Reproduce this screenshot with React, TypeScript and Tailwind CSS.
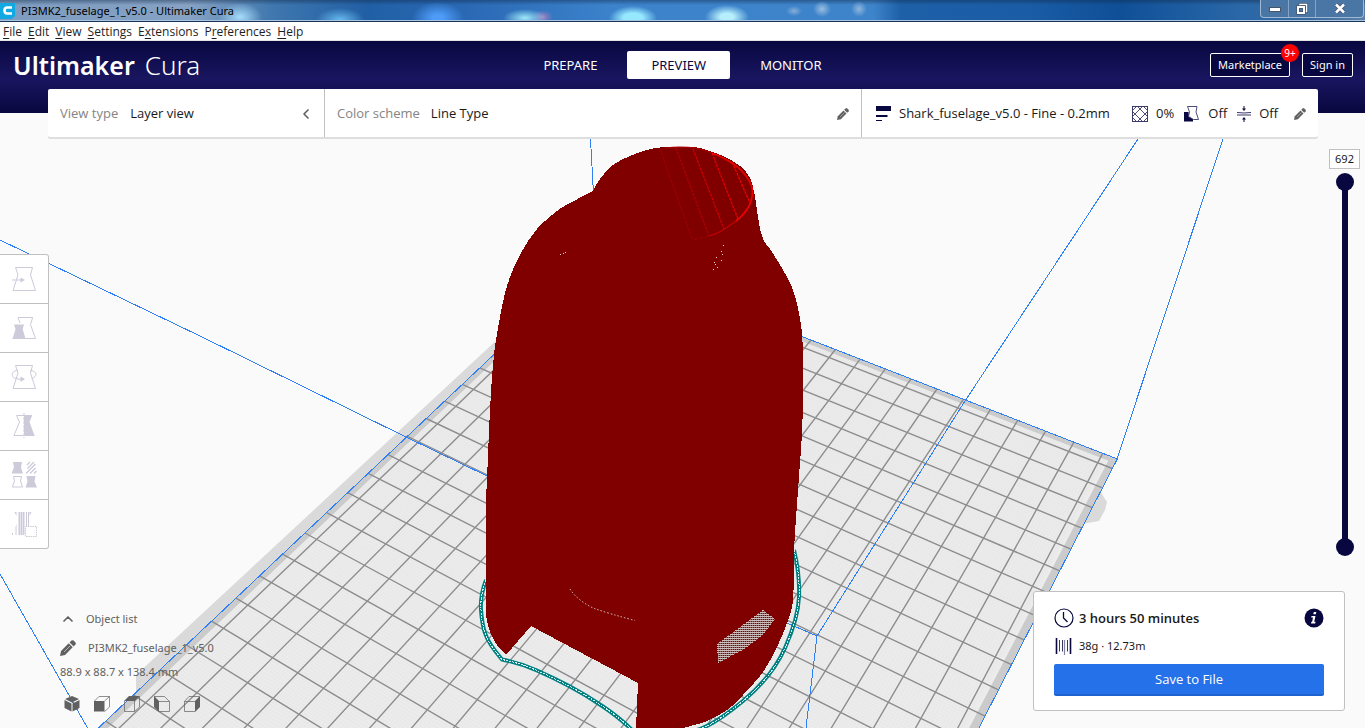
import { useState } from "react";
import type { ReactNode } from "react";
import { ChevronLeft, ChevronUp } from "lucide-react";

type Point = [number, number];

const PLATE_WIDTH = 210;
const PLATE_DEPTH = 250;

// Corners of the build plate on screen, with their perspective weights
const BACK = { x: 597.3, y: 257, w: 1 };
const RIGHT = { x: 1117.3, y: 459, w: 0.8447 };
const LEFT = { x: 91.5, y: 734.5, w: 0.7058 };

// Plate position in mm (measured from the back corner) to screen position
const project = (u: number, v: number): Point => {
  const s = u / PLATE_WIDTH;
  const t = v / PLATE_DEPTH;
  const a = (1 - s - t) * BACK.w;
  const b = s * RIGHT.w;
  const c = t * LEFT.w;
  const w = a + b + c;
  return [
    (a * BACK.x + b * RIGHT.x + c * LEFT.x) / w,
    (a * BACK.y + b * RIGHT.y + c * LEFT.y) / w,
  ];
};

const segment = (from: Point, to: Point) =>
  `M${from[0].toFixed(1)} ${from[1].toFixed(1)}L${to[0].toFixed(1)} ${to[1].toFixed(1)}`;

const gridPath = (start: number, step: number, inset: number) => {
  const parts: string[] = [];
  for (let u = start; u < PLATE_WIDTH - inset; u += step) {
    parts.push(segment(project(u, inset), project(u, PLATE_DEPTH - inset)));
  }
  for (let v = start; v < PLATE_DEPTH - inset; v += step) {
    parts.push(segment(project(inset, v), project(PLATE_WIDTH - inset, v)));
  }
  return parts.join("");
};

const quad = (inset: number) =>
  [
    project(inset, inset),
    project(PLATE_WIDTH - inset, inset),
    project(PLATE_WIDTH - inset, PLATE_DEPTH - inset),
    project(inset, PLATE_DEPTH - inset),
  ]
    .map((p) => p.join(","))
    .join(" ");

// Curve through all the points, without the leading "M"
const smooth = (points: Point[]) =>
  points
    .slice(1)
    .map((p, i) => {
      const before = points[i - 1] ?? points[i];
      const from = points[i];
      const after = points[i + 2] ?? p;
      const c1 = [from[0] + (p[0] - before[0]) / 6, from[1] + (p[1] - before[1]) / 6];
      const c2 = [p[0] - (after[0] - from[0]) / 6, p[1] - (after[1] - from[1]) / 6];
      return `C${c1.join(" ")} ${c2.join(" ")} ${p.join(" ")}`;
    })
    .join("");

const neck: Point[] = [
  [593, 191], [600, 179], [613, 165], [630, 156], [647, 150], [665, 147], [693, 147],
  [710, 151], [725, 157], [740, 166], [750, 178], [754, 192], [756, 203], [759, 223],
  [763, 239], [772, 252], [783, 270], [792, 287], [798, 308], [802, 333], [803, 360],
  [803, 387], [802, 433], [798, 490], [794, 550], [793, 600], [787, 623], [777, 647],
  [763, 672], [743, 695], [727, 710], [707, 721], [683, 728],
];

const backSide: Point[] = [
  [506, 655], [495, 642], [488, 625], [486, 603], [486, 507], [487, 480], [490, 410],
  [493, 365], [496, 340], [500, 317], [505, 293], [512, 272], [522, 251], [537, 229],
  [557, 211], [570, 203], [593, 191],
];

const modelPath = `M593 191${smooth(neck)}L636 728L638 683L531 626L506 655${smooth(backSide)}Z`;

const skirtLeft =
  "M486 580Q480 596 481 610T485 633Q488 643 502 659.500Q520 663 537 670.500T570 686.500T603 706.500T632 730";
const skirtRight =
  "M794 550Q800 575 799 597T785 648T743 701T697 730";

const Scene = () => (
  <svg
    className="absolute inset-0 h-full w-full"
    viewBox="0 0 1365 728"
    preserveAspectRatio="xMidYMid slice"
    aria-hidden="true"
  >
    <defs>
      <pattern id="infill" width="2" height="2" patternUnits="userSpaceOnUse">
        <rect width="2" height="2" fill="#800000" />
        <rect width="2" height="1" fill="#c9bfbe" />
        <rect width="1" height="1" y="1" fill="#9a6a68" />
      </pattern>
    </defs>
    <path d="M598 240L500 337L260 560L136 675V694L150 690L600 262z" fill="#dadada" />
    <path d="M1100 491L1107 502L1105 510L1099 521L1082 524z" fill="#dadada" />
    <polygon points={quad(0)} fill="#cbcbcb" />
    <polygon points={quad(2.3)} fill="#ececec" />
    <path d={gridPath(3, 1, 3)} stroke="#e5e5e5" strokeWidth="0.5" />
    <path d={gridPath(5, 10, 0)} stroke="#8d8d8f" strokeWidth="1.4" />
    <g stroke="#2f80f5" fill="none" shapeRendering="crispEdges">
      <polygon points={quad(0)} />
      <path d="M590.500 139L597 257" />
      <path d="M1117 459L1223 139" />
      <path d="M0 240L200 336L406 437L487 476L787 623L817 636L965 401L1138 139" />
      <path d="M817 636L806 728" />
      <path d="M0 574L91 734" />
    </g>
    <g fill="none">
      <path d={skirtLeft} stroke="#008080" strokeWidth="4" />
      <path d={skirtRight} stroke="#008080" strokeWidth="4" />
      <path d={skirtLeft} stroke="#d5eaea" strokeDasharray="2 1" shapeRendering="crispEdges" />
      <path d={skirtRight} stroke="#d5eaea" strokeDasharray="2 1" shapeRendering="crispEdges" />
    </g>
    <path d={modelPath} fill="#800000" shapeRendering="crispEdges" />
    <g fill="none" strokeWidth="1.200">
      <path d="M660 149L692 239" stroke="#9c0000" strokeDasharray="3 1" />
      <path d="M676 148L709 236" stroke="#b00000" strokeDasharray="3 1" />
      <path d="M693 149L724 229" stroke="#d00000" strokeDasharray="3 1" />
      <path d="M712 153L738 219" stroke="#e80000" strokeDasharray="3 1" />
      <path d="M732 162L750 203" stroke="#f50000" strokeDasharray="3 1" />
      <path d="M665 148Q693 145 712 153" stroke="#a80000" />
      <path d="M712 153Q744 165 752 187Q755 206 736 221" stroke="#f00000" strokeWidth="1.600" />
      <path d="M736 221Q719 234 709 236" stroke="#c40000" />
      <path d="M709 236L692 240" stroke="#990000" strokeDasharray="4 2" />
    </g>
    <path
      d="M560 254h1M563 253h1M565 252h1M723 245h1M721 251h1M722 254h1M716 257h1M721 260h1M714 262h1M715 264h1M717 267h1M713 269h1"
      stroke="#e8dcda"
      shapeRendering="crispEdges"
    />
    <path d="M570 589Q577 600 593 608Q610 614 635 620.500" fill="none" stroke="#d9cccb" strokeDasharray="1.500 2" />
    <path d="M717 644L763 610L775 619L763 635L743 650L718 663z" fill="url(#infill)" shapeRendering="crispEdges" />
  </svg>
);

const CuraMark = () => (
  <svg width="16" height="20" viewBox="0 0 16 20" aria-hidden="true">
    <path d="M0 3H15V16L12 19H0z" fill="#12a9e2" />
    <path d="M12 7.500H7Q4.500 7.500 4.500 10.500T7 13.500H12" fill="none" stroke="#fff" strokeWidth="2.600" />
  </svg>
);

const TitleBar = () => (
  <div className="relative z-10 flex h-[22px] shrink-0 items-start overflow-hidden border-b border-[#1c3556] bg-[linear-gradient(90deg,#7d9cc0_0%,#86a2c4_14%,#3f77ae_20%,#215fa5_27%,#2a68b4_34%,#3c83cc_45%,#3e84ca_64%,#1d60a8_66%,#1a5da6_75%,#0f4f97_82%,#2a68a8_91%,#39699c_96%,#5b7fa6_100%)]">
    <div className="absolute inset-0 bg-[radial-gradient(ellipse_22px_14px_at_240px_17px,#a5dcfb,transparent),radial-gradient(ellipse_24px_12px_at_340px_20px,#66baf0,transparent),radial-gradient(ellipse_26px_16px_at_438px_18px,#4d9cf8_20%,transparent),radial-gradient(ellipse_22px_9px_at_525px_18px,#9fe8f8,transparent),radial-gradient(ellipse_10px_7px_at_543px_17px,#a07dbd,transparent),radial-gradient(ellipse_24px_12px_at_633px_18px,#96e8ff_40%,transparent),radial-gradient(ellipse_22px_12px_at_727px_17px,#b5eefc_30%,transparent),radial-gradient(ellipse_8px_5px_at_794px_11px,#86afd8,transparent),radial-gradient(ellipse_9px_8px_at_822px_9px,#9abde0,transparent),radial-gradient(ellipse_8px_8px_at_859px_9px,#8fb6dd,transparent),linear-gradient(180deg,#10284870_0px,transparent_5px)]" />
    <div className="relative flex h-[21px] w-full items-start border-b border-[#a9c4e0]">
      <CuraMark />
      <h1 className="grow pt-px pl-[5px] text-[11px] leading-5 text-black">
        PI3MK2_fuselage_1_v5.0 - Ultimaker Cura
      </h1>
      <div className="mr-px flex h-[18px] divide-x divide-[#86a5c6] rounded-b-[4px] border border-t-0 border-[#9fb9d4] bg-[#4a76a6]">
        <button aria-label="Minimize" className="flex w-7 items-center justify-center">
          <svg width="12" height="6" viewBox="0 0 12 6">
            <rect x=".5" y="1.500" width="11" height="4" fill="#fff" stroke="#48566b" />
          </svg>
        </button>
        <button aria-label="Restore" className="flex w-[27px] items-center justify-center">
          <svg width="12" height="12" viewBox="0 0 12 12" fill="none">
            <path d="M4 3V1.500H10.500V8.500H9" stroke="#48566b" strokeWidth="3" />
            <path d="M4 3V1.500H10.500V8.500H9" stroke="#fff" strokeWidth="1.500" />
            <rect x="2" y="4" width="6" height="6" stroke="#48566b" strokeWidth="3.500" />
            <rect x="2" y="4" width="6" height="6" stroke="#fff" strokeWidth="2" />
          </svg>
        </button>
        <button aria-label="Close" className="flex w-[47px] items-center justify-center">
          <svg width="12" height="11" viewBox="0 0 12 11" fill="none">
            <path d="M2 1.500L10 9.500M10 1.500L2 9.500" stroke="#48566b" strokeWidth="4" />
            <path d="M2 1.500L10 9.500M10 1.500L2 9.500" stroke="#fff" strokeWidth="2.500" />
          </svg>
        </button>
      </div>
    </div>
  </div>
);

const menuItems = [
  ["", "F", "ile"],
  ["", "E", "dit"],
  ["", "V", "iew"],
  ["", "S", "ettings"],
  ["E", "x", "tensions"],
  ["P", "r", "eferences"],
  ["", "H", "elp"],
];

const MenuBar = () => (
  <nav className="relative z-10 flex h-[19px] shrink-0 items-center gap-[6px] border-b border-[#e3e3e3] bg-white pt-px pl-[3px] font-['Open_Sans',sans-serif] text-[12px] leading-[18px] text-[#1e1e1e]">
    {menuItems.map(([before, key, after]) => (
      <button key={key + after}>
        {before}
        <span className="underline underline-offset-2">{key}</span>
        {after}
      </button>
    ))}
  </nav>
);

const tabs = ["PREPARE", "PREVIEW", "MONITOR"];

const MainHeader = () => {
  const [active, setActive] = useState("PREVIEW");

  return (
    <header className="relative h-[72px] shrink-0 bg-[linear-gradient(180deg,#08073f_0%,#191660_52%,#08073f_100%)]">
      <div className="grid h-12 grid-cols-[1fr_auto_1fr] items-center px-3 text-white">
        <div className="flex items-baseline gap-[10px] pl-px leading-8">
          <span className="text-[25px] font-semibold">Ultimaker</span>
          <span className="text-[26px] font-light">Cura</span>
        </div>
        <nav className="flex gap-[6px]">
          {tabs.map((tab) => (
            <button
              key={tab}
              onClick={() => setActive(tab)}
              className={
                tab === active
                  ? "h-7 rounded-[2px] bg-white px-6 pt-px text-[13px] text-[#08073f]"
                  : "h-7 rounded-[2px] px-6 pt-px text-[13px] text-white"
              }
            >
              {tab}
            </button>
          ))}
        </nav>
        <div className="flex justify-end gap-3 text-[11px]">
          <button className="relative h-6 rounded-[2px] border border-white bg-[#08073f] px-[7px] pt-px">
            Marketplace
            <span className="absolute -top-[10px] -right-[10px] flex size-[18px] items-center justify-center rounded-full bg-[#ff0000] text-[10px]">
              9+
            </span>
          </button>
          <button className="h-6 rounded-[2px] border border-white bg-[#08073f] px-[7px] pt-px">
            Sign in
          </button>
        </div>
      </div>
    </header>
  );
};

const Pencil = ({ className }: { className: string }) => (
  <svg className={className} viewBox="0 0 12 12" fill="currentColor" aria-hidden="true">
    <path d="M0 12L.8 8.200L6.500 2.500L9.500 5.500L3.800 11.200z" />
    <path d="M7.200 1.800L8.600 .4Q9.400 -.2 10.200 .4L11.600 1.800Q12.200 2.600 11.600 3.400L10.200 4.800z" />
    <path d="M3 9L7.500 4.500" stroke="#fff" strokeWidth=".4" />
  </svg>
);

const LayersIcon = () => (
  <svg width="16" height="16" viewBox="0 0 16 16" fill="#08073f" aria-hidden="true">
    <path d="M0 0H15V5H0zM0 9H11.500V11H0zM0 14H6V15H0z" />
  </svg>
);

const InfillIcon = () => (
  <svg width="16" height="16" viewBox="0 0 16 16" fill="none" stroke="#3a3968" aria-hidden="true">
    <rect x=".5" y=".5" width="15" height="15" />
    <path d="M0 5L5 0M0 11L11 0M5 16L16 5M11 16L16 11M5 0L16 11M11 0L16 5M0 5L11 16M0 11L5 16" strokeWidth=".9" />
  </svg>
);

const SupportIcon = () => (
  <svg width="16" height="16" viewBox="0 0 16 16" aria-hidden="true">
    <path d="M0 6H4.500L5 10L9 12V15.500H0z" fill="#08073f" />
    <path d="M3.500.500H13L12 6L14.500 13.500H9.500L4.500 10.500L5.500 6z" fill="#fff" stroke="#3a3968" strokeWidth=".9" />
  </svg>
);

const AdhesionIcon = () => (
  <svg width="14" height="16" viewBox="0 0 14 16" fill="#08073f" aria-hidden="true">
    <path d="M6.500 0H7.500V2.500H9L7 5L5 2.500H6.500zM6.500 16H7.500V13.500H9L7 11L5 13.500H6.500z" />
    <path d="M0 6.500Q7 7.500 14 6.500M0 9H14" stroke="#3a3968" fill="none" />
  </svg>
);

const StagePanel = () => (
  <section className="relative z-10 mx-12 -mt-6 -mr-px flex h-12 shrink-0 self-stretch rounded-[2px] bg-white font-['Open_Sans',sans-serif] text-[13px] text-[#191919] shadow-[0_2px_0_#dedede]">
    <button className="flex w-[277px] items-center gap-3 border-r border-[#c0c0c0] pt-px pr-[10px] pl-3">
      <span className="text-[#848484]">View type</span>
      <span>Layer view</span>
      <ChevronLeft className="ml-auto size-4 text-[#606060]" strokeWidth={2.5} />
    </button>
    <button className="flex grow items-center gap-[11px] border-r border-[#c0c0c0] px-3 pt-px">
      <span className="text-[#848484]">Color scheme</span>
      <span>Line Type</span>
      <Pencil className="ml-auto size-3 text-[#606060]" />
    </button>
    <button className="flex w-[456px] items-center gap-[10px] pt-px pr-3 pl-[14px]">
      <span className="flex grow items-center gap-[7px]">
        <LayersIcon />
        Shark_fuselage_v5.0 - Fine - 0.2mm
      </span>
      <span className="flex items-center gap-2">
        <InfillIcon />
        0%
      </span>
      <span className="flex items-center gap-2">
        <SupportIcon />
        Off
      </span>
      <span className="flex items-center gap-2">
        <AdhesionIcon />
        Off
      </span>
      <Pencil className="ml-[6px] size-3 text-[#606060]" />
    </button>
  </section>
);

const HOURGLASS = "M3.500.500H20.500L18.500 8L23.500 23.500H1L6 8z";

const tools: { name: string; icon: ReactNode }[] = [
  {
    name: "Move",
    icon: (
      <>
        <path d={HOURGLASS} fill="none" />
        <path d="M0 13H9" />
        <path d="M8.500 10.500V15.500L13 13z" fill="currentColor" stroke="none" />
      </>
    ),
  },
  {
    name: "Scale",
    icon: (
      <>
        <path d="M8 7L6 1.500H20.700L18.500 8.500L23.500 22.500H13" fill="none" />
        <path d="M2 8.500H12L10.700 13L13.500 23H.500L3.500 13z" fill="currentColor" stroke="none" />
      </>
    ),
  },
  {
    name: "Rotate",
    icon: (
      <>
        <path d={HOURGLASS} fill="none" />
        <path d="M6 5.500C-1 5-1.500 13 4 13.500L9 14.500M18 5.500C26 6 25.500 12 19.500 13.500" fill="none" />
        <path d="M8.500 11.500V17L13 14z" fill="currentColor" stroke="none" />
      </>
    ),
  },
  {
    name: "Mirror",
    icon: (
      <>
        <path d="M12 1.500H4.500L7.500 8L2 21.500H12" fill="none" />
        <path d="M12 1H20.300L17.500 8L22.700 22H12z" fill="currentColor" stroke="none" />
        <path d="M12 -1V24" strokeDasharray="3 1" />
      </>
    ),
  },
  {
    name: "Per model settings",
    icon: (
      <>
        <path d="M1 -1H10L9 4.500L11 10.500H-.500L2 4.500z" fill="currentColor" stroke="none" />
        <path d="M14.500 13H23.500L22.500 18.500L25 24.500H13.500L15.500 18.500z" fill="currentColor" stroke="none" />
        <path d="M1.500 13.500H9.500L8.500 18L10.500 24H.300L2.500 18z" fill="none" />
        <path d="M15 2L18 -1M15.500 5.500L22 -1M14 10.500L23.500 1M18 10.500L23.500 5M22 10.500L24.500 8" fill="none" strokeWidth="1.300" />
      </>
    ),
  },
  {
    name: "Support blocker",
    icon: (
      <>
        <path d="M2.500 0H4.500V4zM19.500 0H17.500V4zM4.500 12V23H3.500V15z" fill="currentColor" stroke="none" />
        <path d="M7.500 0V23M11.500 0V23" strokeWidth="2" />
        <path d="M9.500 0V23M14.500 0V14M16.500 0V14" strokeWidth="1" />
        <path d="M.500 23V21" fill="none" />
        <rect x="13.500" y="14.500" width="11" height="10" fill="#fff" strokeDasharray="1.500 .8" />
      </>
    ),
  },
];

const Toolbar = () => (
  <div className="mt-[115px] w-[49px] divide-y divide-[#c0c0c0] rounded-r-[3px] border border-l-0 border-[#c0c0c0] bg-white">
    {tools.map(({ name, icon }) => (
      <button
        key={name}
        aria-label={name}
        disabled
        className="flex h-[49px] w-12 items-center justify-center last:h-12"
      >
        <svg
          className="size-6 overflow-visible text-[#cdcad9]"
          viewBox="0 0 24 24"
          stroke="currentColor"
          aria-hidden="true"
        >
          {icon}
        </svg>
      </button>
    ))}
  </div>
);

const views: { name: string; face: string; body: string }[] = [
  { name: "3D view", face: "M8 0L15 3L8 6.500L1 3zM.500 4L7.500 7.500V15.500L.500 12zM15.500 4L8.500 7.500V15.500L15.500 12z", body: "" },
  { name: "Front view", face: "M0 5H10.500V15.500H0z", body: "M.500 5L5 .5H15.500V11L10.500 15.500M10.500 5L15.500.500" },
  { name: "Top view", face: "M0 5L5 0H16L11 5z", body: "M.500 5V15.500H10.500V5M10.500 15.500L15.500 11V.500" },
  { name: "Left view", face: "M0 0L5 5V16L0 11z", body: "M0 .5H10.500L15.500 5.500M5 5.500H15.500V15.500H5" },
  { name: "Right view", face: "M16 0L11 5V16L16 11z", body: "M11 5.500H.500V15.500H11M.500 5.500L5 .5H15.500" },
];

const ObjectInfo = () => (
  <div className="ml-[60px] text-[11px] text-[#606060]">
    <button className="flex h-5 items-center gap-[10px]">
      <ChevronUp className="size-4" strokeWidth={2.5} />
      Object list
    </button>
    <div className="mt-[9px] flex h-5 items-center gap-3">
      <button aria-label="Rename">
        <Pencil className="size-4" />
      </button>
      PI3MK2_fuselage_1_v5.0
    </div>
    <p className="mt-[4px] leading-5">88.9 x 88.7 x 138.4 mm</p>
    <div className="mt-[14px] ml-1 flex gap-[14px]">
      {views.map(({ name, face, body }) => (
        <button key={name} aria-label={name}>
          <svg className="size-4" viewBox="0 0 16 16" aria-hidden="true">
            <path d={face} fill="currentColor" />
            <path d={body} fill="none" stroke="currentColor" strokeWidth=".7" />
          </svg>
        </button>
      ))}
    </div>
  </div>
);

const LAYERS = 692;

const rangeClass =
  "pointer-events-none absolute inset-0 h-full w-[18px] appearance-none bg-transparent [writing-mode:vertical-lr] [direction:rtl] [&::-webkit-slider-thumb]:pointer-events-auto [&::-webkit-slider-thumb]:size-[18px] [&::-webkit-slider-thumb]:appearance-none [&::-webkit-slider-thumb]:rounded-full [&::-webkit-slider-thumb]:bg-[#08073f]";

const LayerSlider = () => {
  const [top, setTop] = useState(LAYERS);
  const [bottom, setBottom] = useState(0);

  return (
    <div className="mt-[10px] mr-[5px] flex flex-col items-center">
      <output className="h-5 w-[31px] border border-[#c0c0c0] bg-white text-center text-[11px] leading-[18px] text-[#191919]">
        {top}
      </output>
      <div className="relative mt-1 flex h-[383px] w-[18px] justify-center py-[9px]">
        <div className="h-full w-[6px] bg-[#08073f]" />
        <input
          type="range"
          aria-label="Upper layer"
          min={0}
          max={LAYERS}
          value={top}
          onChange={(e) => setTop(Math.max(Number(e.target.value), bottom))}
          className={rangeClass}
        />
        <input
          type="range"
          aria-label="Lower layer"
          min={0}
          max={LAYERS}
          value={bottom}
          onChange={(e) => setBottom(Math.min(Number(e.target.value), top))}
          className={rangeClass}
        />
      </div>
    </div>
  );
};

const PrintCard = () => (
  <div className="mr-5 mb-[17px] w-[312px] rounded-[3px] border border-[#c0c0c0] bg-white px-5 pt-4 pb-[14px] text-[#191919]">
    <div className="flex h-5 items-center gap-[5px]">
      <svg className="size-5" viewBox="0 0 20 20" fill="none" stroke="#08073f" aria-hidden="true">
        <circle cx="10" cy="10" r="9" strokeWidth="1.200" />
        <path d="M9.500 4V10L13.500 14" strokeWidth="1.300" />
      </svg>
      <span className="grow pt-px font-['Open_Sans',sans-serif] text-[13px] font-semibold">3 hours 50 minutes</span>
      <button aria-label="Print details">
        <svg className="size-5" viewBox="0 0 20 20" aria-hidden="true">
          <circle cx="10" cy="10" r="9.500" fill="#08073f" />
          <path d="M9.800 4H12.300L11.800 6.300H9.300zM7.500 8H11.500L10.200 13.800H11.500L11.200 15.500H7L7.300 14L8.200 13.500L9 9.500H7.200z" fill="#fff" />
        </svg>
      </button>
    </div>
    <div className="mt-2 flex h-5 items-center gap-[5px] text-[11px]">
      <svg className="size-5" viewBox="0 0 20 20" fill="none" stroke="#08073f" aria-hidden="true">
        <path d="M2.500 2V18M16.500 2V18" strokeWidth="1.600" />
        <path d="M5.500 4V15.500M8.500 4V15.500M13.500 4V15.500" strokeWidth=".8" />
        <path d="M10.500 4V19" stroke="#8584a0" strokeWidth="1.200" />
      </svg>
      38g · 12.73m
    </div>
    <button className="mt-2 h-8 w-full rounded-[2px] border-b-2 border-[#1d62cf] bg-[#2571e9] pt-px font-['Open_Sans',sans-serif] text-[13px] text-white">
      Save to File
    </button>
  </div>
);

const App = () => (
  <div className="relative flex h-screen min-h-[640px] flex-col overflow-hidden bg-[#fafafa] font-['Noto_Sans','Open_Sans',sans-serif]">
    <Scene />
    <TitleBar />
    <MenuBar />
    <MainHeader />
    <div className="flex shrink-0 pr-12">
      <div className="flex grow flex-col">
        <StagePanel />
      </div>
    </div>
    <main className="relative flex grow justify-between pt-[2px]">
      <div className="flex flex-col justify-between pb-4">
        <Toolbar />
        <ObjectInfo />
      </div>
      <div className="flex flex-col items-end justify-between">
        <LayerSlider />
        <PrintCard />
      </div>
    </main>
  </div>
);

export default App;
